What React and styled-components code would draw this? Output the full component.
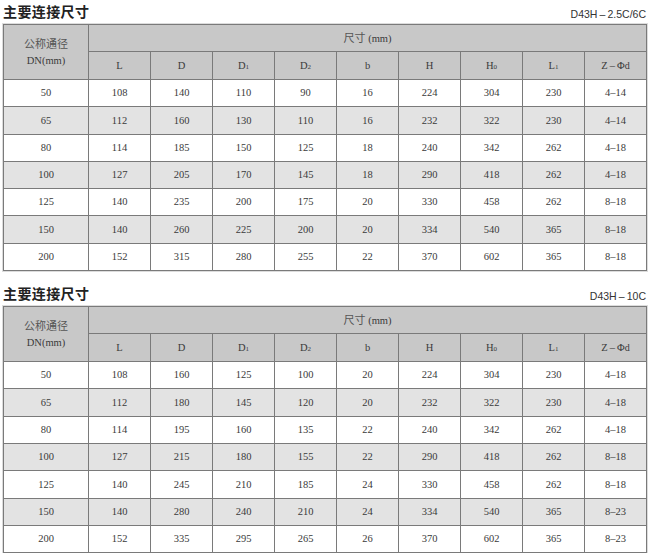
import React from "react";
import styled, { createGlobalStyle } from "styled-components";

const GlobalStyle = createGlobalStyle`
  html, body {
    margin: 0;
    padding: 0;
    background: #fff;
  }
`;

const Page = styled.div`
  width: 650px;
  padding: 0 4px 0 3px;
  box-sizing: border-box;
  display: flex;
  flex-direction: column;
  gap: 11px;
`;

const Section = styled.section`
  display: flex;
  flex-direction: column;
`;

const TitleBar = styled.div`
  height: 24px;
  display: flex;
  align-items: center;
  justify-content: space-between;
`;

const Title = styled.h2`
  margin: 0;
  font-family: "Noto Sans CJK SC", sans-serif;
  font-size: 14px;
  font-weight: 700;
  color: #222;
  letter-spacing: 0.4px;
  margin-top: -2px;
`;

const Code = styled.span`
  font-family: "Liberation Sans", Arial, sans-serif;
  font-size: 10.5px;
  color: #333;
  margin-top: 4px;
`;

const Table = styled.table`
  width: 643px;
  border-collapse: collapse;
  table-layout: fixed;
  border: 1px solid #b5b5b5;
  box-shadow: 0 0 0 1px #dcdcdc;
`;

const Cell = styled.td`
  border: 1px solid #7a7a7a;
  text-align: center;
  vertical-align: middle;
  padding: 0;
  height: ${(p) => p.$h || 26.3}px;
  background: ${(p) => (p.$head ? "#c8c8c8" : p.$alt ? "#e3e3e3" : "#fff")};
  font-family: "Liberation Serif", "Times New Roman", serif;
  font-size: 10.5px;
  font-weight: 400;
  color: #3a3a3a;
  line-height: 1.5;
`;

const CnLabel = styled.span`
  font-family: "Noto Sans CJK SC", sans-serif;
  font-size: 11px;
  color: #555;
`;

const Sub = styled.span`
  font-size: ${(p) => p.$size || 7}px;
`;

const columns = [
  "L",
  "D",
  <>D<Sub>1</Sub></>,
  <>D<Sub>2</Sub></>,
  "b",
  "H",
  <>H<Sub>0</Sub></>,
  <>L<Sub>1</Sub></>,
  <>Z{"\u2009–\u2009"}Φ<Sub $size={10}>d</Sub></>,
];

const tables = [
  {
    code: "D43H\u2009–\u20092.5C/6C",
    rows: [
      [50, 108, 140, 110, 90, 16, 224, 304, 230, "4–14"],
      [65, 112, 160, 130, 110, 16, 232, 322, 230, "4–14"],
      [80, 114, 185, 150, 125, 18, 240, 342, 262, "4–18"],
      [100, 127, 205, 170, 145, 18, 290, 418, 262, "4–18"],
      [125, 140, 235, 200, 175, 20, 330, 458, 262, "8–18"],
      [150, 140, 260, 225, 200, 20, 334, 540, 365, "8–18"],
      [200, 152, 315, 280, 255, 22, 370, 602, 365, "8–18"],
    ],
  },
  {
    code: "D43H\u2009–\u200910C",
    rows: [
      [50, 108, 160, 125, 100, 20, 224, 304, 230, "4–18"],
      [65, 112, 180, 145, 120, 20, 232, 322, 230, "4–18"],
      [80, 114, 195, 160, 135, 22, 240, 342, 262, "4–18"],
      [100, 127, 215, 180, 155, 22, 290, 418, 262, "8–18"],
      [125, 140, 245, 210, 185, 24, 330, 458, 262, "8–18"],
      [150, 140, 280, 240, 210, 24, 334, 540, 365, "8–23"],
      [200, 152, 335, 295, 265, 26, 370, 602, 365, "8–23"],
    ],
  },
];

const SizeTable = ({ code, rows }) => (
  <Section>
    <TitleBar>
      <Title>主要连接尺寸</Title>
      <Code>{code}</Code>
    </TitleBar>
    <Table>
      <colgroup>
        <col style={{ width: 85 }} />
        {columns.map((_, i) => (
          <col key={i} style={{ width: 62 }} />
        ))}
      </colgroup>
      <thead>
        <tr>
          <Cell as="th" $head rowSpan={2} $h={26}>
            <CnLabel>公称通径</CnLabel>
            <br />
            DN(mm)
          </Cell>
          <Cell as="th" $head colSpan={9} $h={26}>
            <CnLabel>尺寸</CnLabel> (mm)
          </Cell>
        </tr>
        <tr>
          {columns.map((c, i) => (
            <Cell as="th" key={i} $head $h={27}>
              {c}
            </Cell>
          ))}
        </tr>
      </thead>
      <tbody>
        {rows.map((r, i) => (
          <tr key={i}>
            {r.map((v, j) => (
              <Cell key={j} $alt={i % 2 === 1}>
                {v}
              </Cell>
            ))}
          </tr>
        ))}
      </tbody>
    </Table>
  </Section>
);

export default function App() {
  return (
    <>
      <GlobalStyle />
      <Page>
        {tables.map((t, i) => (
          <SizeTable key={i} code={t.code} rows={t.rows} />
        ))}
      </Page>
    </>
  );
}
